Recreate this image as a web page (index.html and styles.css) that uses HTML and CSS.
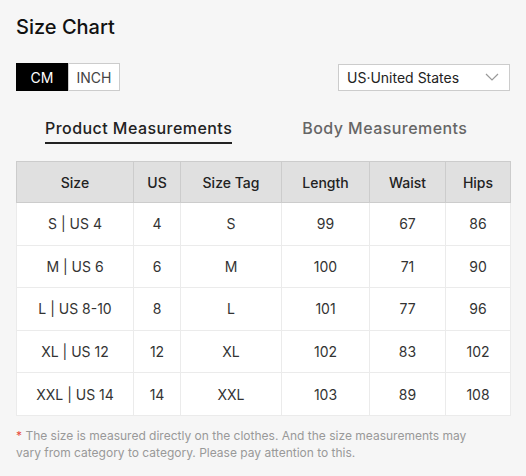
FILE: index.html
```html
<!DOCTYPE html>
<html lang="en">
<head>
    <meta charset="UTF-8">
    <meta name="viewport" content="width=device-width, initial-scale=1.0">
    <title>Size Chart</title>
    <link rel="stylesheet" href="styles.css">
</head>
<body>
    <h1 class="title">Size Chart</h1>

    <div class="controls">
        <div class="units">
            <button class="unit active">CM</button>
            <button class="unit">INCH</button>
        </div>
        <div class="select">
            <span>US·United States</span>
            <svg width="14" height="8" viewBox="0 0 14 8"><path d="M1 1l6 6 6-6" fill="none" stroke="#999" stroke-width="1.2"/></svg>
        </div>
    </div>

    <div class="tabs">
        <div class="tab active">Product Measurements</div>
        <div class="tab">Body Measurements</div>
    </div>

    <table class="chart">
        <colgroup>
            <col class="c-size">
            <col class="c-us">
            <col class="c-tag">
            <col class="c-len">
            <col class="c-waist">
            <col class="c-hips">
        </colgroup>
        <thead>
            <tr>
                <th>Size</th>
                <th>US</th>
                <th>Size Tag</th>
                <th>Length</th>
                <th>Waist</th>
                <th>Hips</th>
            </tr>
        </thead>
        <tbody>
            <tr><td>S | US 4</td><td>4</td><td>S</td><td>99</td><td>67</td><td>86</td></tr>
            <tr><td>M | US 6</td><td>6</td><td>M</td><td>100</td><td>71</td><td>90</td></tr>
            <tr><td>L | US 8-10</td><td>8</td><td>L</td><td>101</td><td>77</td><td>96</td></tr>
            <tr><td>XL | US 12</td><td>12</td><td>XL</td><td>102</td><td>83</td><td>102</td></tr>
            <tr><td>XXL | US 14</td><td>14</td><td>XXL</td><td>103</td><td>89</td><td>108</td></tr>
        </tbody>
    </table>

    <p class="note">The size is measured directly on the clothes. And the size measurements may vary from category to category. Please pay attention to this.</p>
</body>
</html>
```

FILE: styles.css
```css
body {
    font-family: Inter, "Open Sans", sans-serif;
    background-color: #f6f6f6;
    color: #222;
    margin: 0;
    padding: 14px 16px 0 16px;
}
.title {
    font-size: 20px;
    font-weight: 500;
    margin: 0;
    line-height: 26px;
    color: #111;
}
.controls {
    display: flex;
    justify-content: space-between;
    align-items: center;
    margin-top: 23px;
}
.units {
    display: flex;
}
.unit {
    font-family: inherit;
    font-size: 14px;
    height: 28px;
    padding: 0;
    width: 52px;
    border: 1px solid #ccc;
    background-color: #fff;
    color: #444;
}
.unit.active {
    background-color: #000;
    border-color: #000;
    color: #fff;
}
.select {
    width: 172px;
    height: 27px;
    box-sizing: border-box;
    border: 1px solid #ccc;
    background-color: #fff;
    display: flex;
    align-items: center;
    justify-content: space-between;
    padding: 0 10px 0 8px;
    font-size: 14px;
    color: #222;
}
.tabs {
    display: flex;
    gap: 70px;
    margin: 27px 0 0 29px;
}
.tab {
    font-size: 16px;
    font-weight: 500;
    letter-spacing: 0.45px;
    color: #666;
    padding-bottom: 4px;
    line-height: 20px;
}
.tab.active {
    color: #222;
    border-bottom: 2px solid #222;
}
.chart {
    margin-top: 17px;
    width: 494px;
    table-layout: fixed;
    border-collapse: collapse;
    background-color: #fff;
    font-size: 14px;
}
.chart th {
    background-color: #e0e0e0;
    font-weight: 500;
    height: 40px;
    padding: 0;
    border: 1px solid #ccc;
    color: #222;
}
.chart td {
    height: 41.6px;
    text-align: center;
    border: 1px solid #ebebeb;
    color: #333;
    padding: 0;
}
.c-size { width: 117px; }
.c-us { width: 47px; }
.c-tag { width: 101px; }
.c-len { width: 88px; }
.c-waist { width: 76px; }
.c-hips { width: 65px; }
.note {
    font-size: 12px;
    color: #999;
    line-height: 17px;
    width: 470px;
    margin: 11px 0 0 0;
}
.note::before {
    content: "* ";
    color: #e84c3d;
}
```
